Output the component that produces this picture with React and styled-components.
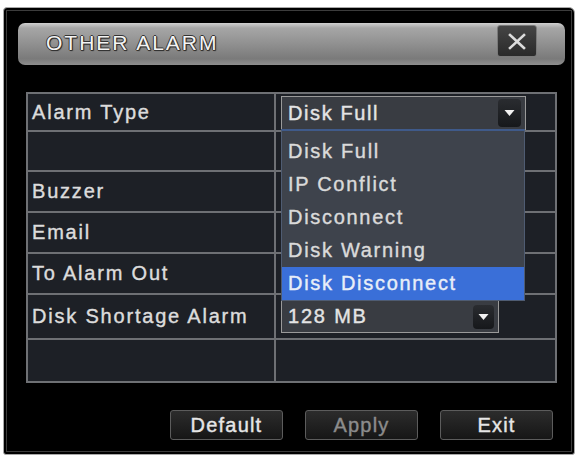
import React from "react";
import styled, { createGlobalStyle } from "styled-components";

const Global = createGlobalStyle`
  html, body { margin: 0; padding: 0; background: #ffffff; }
  body { font-family: "Liberation Sans", Arial, sans-serif; }
  * { box-sizing: border-box; }
`;

const Frame = styled.div`
  margin: 7px 0 0 3px;
  width: 572px;
  height: 448px;
  background: #000;
  border: 1px solid #a8a8a8;
  border-radius: 4px 6px 3px 3px;
  padding: 2px;
`;

const Inner = styled.div`
  height: 100%;
  border: 1px solid #3c3c3c;
  display: flex;
  flex-direction: column;
`;

const TitleBar = styled.div`
  margin: 12px 6px 0 11px;
  height: 42px;
  border-radius: 7px;
  background: linear-gradient(#d0d0d0 0%, #a6a6a6 12%, #939393 45%, #7a7a7a 85%, #8e8e8e 100%);
  display: flex;
  align-items: flex-start;
  justify-content: space-between;
  padding: 0 28px 0 28px;
`;

const Title = styled.div`
  margin-top: 8px;
  font-size: 21px;
  letter-spacing: 2px;
  color: #f4f4f4;
  text-shadow: 1px 0 0 #333, -1px 0 0 #333, 0 1px 0 #333, 0 -1px 0 #333, 1px 1px 1px #222;
`;

const CloseButton = styled.div`
  margin-top: 2px;
  width: 40px;
  height: 32px;
  background: linear-gradient(#454545, #2a2a2a);
  border: 1px solid #7a7a7a;
  border-radius: 3px;
  display: flex;
  align-items: center;
  justify-content: center;
`;

const Table = styled.div`
  margin: 27px 0 0 19px;
  width: 531px;
  height: 291px;
  background: #6e7074;
  padding: 2px;
  display: grid;
  grid-template-columns: 246px 1fr;
  grid-template-rows: 36px 38px 39px 39px 39px 43px 41px;
  gap: 2px;
`;

const Cell = styled.div`
  background: #1d2026;
  display: flex;
  align-items: ${(p) => (p.$top ? "flex-start" : "center")};
  padding-left: ${(p) => (p.$value ? "5px" : "4px")};
  color: #dcdcdc;
  font-size: 20px;
  letter-spacing: 1.8px;
  -webkit-text-stroke: 0.4px #dcdcdc;
  position: relative;
`;

const Select = styled.div`
  position: relative;
  margin-top: ${(p) => p.$mt}px;
  width: ${(p) => p.$w}px;
  height: ${(p) => p.$h}px;
  background: #393c42;
  border: 1px solid #9a9a9a;
  display: flex;
  align-items: center;
  padding-left: 6px;
  color: #e4e4e4;
  -webkit-text-stroke: 0.4px #e4e4e4;
  font-size: 20px;
  letter-spacing: ${(p) => p.$ls || 1.6}px;
`;

const Arrow = styled.div`
  position: absolute;
  right: 4px;
  top: 50%;
  transform: translateY(-50%);
  width: ${(p) => p.$w}px;
  height: ${(p) => p.$h}px;
  background: linear-gradient(#2a2c30, #16181b);
  border-radius: 4px;
  display: flex;
  align-items: center;
  justify-content: center;
`;

const List = styled.div`
  position: absolute;
  left: -1px;
  top: 100%;
  width: 244px;
  background: #3e434c;
  border: 1px solid #4f5c72;
  border-top: 2px solid #3f5a8a;
  padding-top: 4px;
  z-index: 2;
`;

const Option = styled.div`
  height: 33px;
  display: flex;
  align-items: center;
  padding-left: 6px;
  font-size: 20px;
  letter-spacing: 1.7px;
  color: ${(p) => (p.$active ? "#e8eef8" : "#dadada")};
  -webkit-text-stroke: 0.4px ${(p) => (p.$active ? "#e8eef8" : "#dadada")};
  background: ${(p) => (p.$active ? "#3a6fd8" : "transparent")};
`;

const ButtonRow = styled.div`
  margin: 27px 18px 0 0;
  display: flex;
  justify-content: flex-end;
  gap: 22px;
`;

const Button = styled.div`
  width: 113px;
  height: 30px;
  border: 1px solid #5c5c5c;
  border-radius: 3px;
  background: linear-gradient(#2c2c2c, #161616);
  display: flex;
  align-items: center;
  justify-content: center;
  font-size: 20px;
  letter-spacing: 1.2px;
  color: ${(p) => (p.$disabled ? "#8c8c8c" : "#e6e6e6")};
  -webkit-text-stroke: 0.4px ${(p) => (p.$disabled ? "#8c8c8c" : "#e6e6e6")};
`;

const DownIcon = () => (
  <svg width="11" height="8" viewBox="0 0 11 8">
    <path d="M0.5 1 L10.5 1 L5.5 7 Z" fill="#f2f2f2" />
  </svg>
);

const XIcon = () => (
  <svg width="20" height="17" viewBox="0 0 20 17">
    <path d="M3 2 L17 15 M17 2 L3 15" stroke="#dcdcdc" strokeWidth="2.6" strokeLinecap="square" />
  </svg>
);

const options = ["Disk Full", "IP Conflict", "Disconnect", "Disk Warning", "Disk Disconnect"];

export default function App() {
  return (
    <>
      <Global />
      <Frame>
        <Inner>
          <TitleBar>
            <Title>OTHER ALARM</Title>
            <CloseButton>
              <XIcon />
            </CloseButton>
          </TitleBar>
          <Table>
            <Cell>Alarm Type</Cell>
            <Cell $value $top>
              <Select $mt={2} $w={245} $h={34}>
                Disk Full
                <Arrow $w={23} $h={28}>
                  <DownIcon />
                </Arrow>
                <List>
                  {options.map((o, i) => (
                    <Option key={o} $active={i === options.length - 1}>
                      {o}
                    </Option>
                  ))}
                </List>
              </Select>
            </Cell>
            <Cell />
            <Cell />
            <Cell>Buzzer</Cell>
            <Cell />
            <Cell>Email</Cell>
            <Cell />
            <Cell>To Alarm Out</Cell>
            <Cell />
            <Cell>Disk Shortage Alarm</Cell>
            <Cell $value $top>
              <Select $mt={5} $w={218} $h={33} $ls={1.8}>
                128 MB
                <Arrow $w={21} $h={24}>
                  <DownIcon />
                </Arrow>
              </Select>
            </Cell>
            <Cell />
            <Cell />
          </Table>
          <ButtonRow>
            <Button>Default</Button>
            <Button $disabled>Apply</Button>
            <Button>Exit</Button>
          </ButtonRow>
        </Inner>
      </Frame>
    </>
  );
}
